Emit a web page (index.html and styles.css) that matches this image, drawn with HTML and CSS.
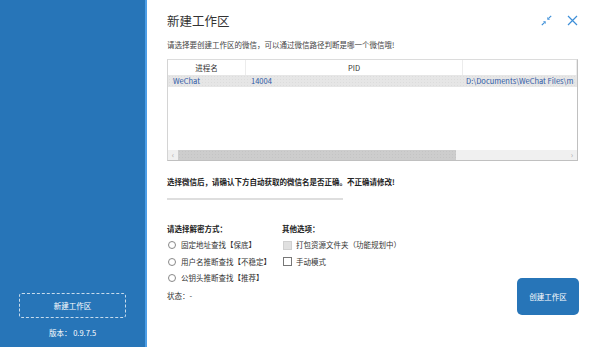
FILE: index.html
```html
<!DOCTYPE html>
<html lang="zh">
<head>
<meta charset="utf-8">
<title>新建工作区</title>
<link rel="stylesheet" href="styles.css">
</head>
<body>
<div class="app">
  <aside class="sidebar">
    <div class="side-btn">新建工作区</div>
    <div class="version">版本：&nbsp;0.9.7.5</div>
  </aside>
  <main class="main">
    <header class="head">
      <h1 class="title">新建工作区</h1>
      <div class="win-icons">
        <svg class="ico" width="11" height="11" viewBox="0 0 11 11">
          <path d="M10.2 0.8 L7.6 3.4" stroke="#3d8fd8" stroke-width="1.2" fill="none"/>
          <path d="M6.3 4.7 L6.3 2 L9 4.7 Z" fill="#3d8fd8"/>
          <path d="M0.8 10.2 L3.4 7.6" stroke="#3d8fd8" stroke-width="1.2" fill="none"/>
          <path d="M4.7 6.3 L4.7 9 L2 6.3 Z" fill="#3d8fd8"/>
        </svg>
        <svg class="ico" width="11" height="11" viewBox="0 0 11 11">
          <path d="M1 1 L10 10 M10 1 L1 10" stroke="#3d8fd8" stroke-width="1.2" fill="none"/>
        </svg>
      </div>
    </header>
    <p class="sub">请选择要创建工作区的微信，可以通过微信路径判断是哪一个微信哦!</p>
    <div class="table">
      <div class="thead">
        <div class="c1">进程名</div>
        <div class="c2">PID</div>
        <div class="c3"></div>
      </div>
      <div class="trow">
        <div class="c1 l">WeChat</div>
        <div class="c2 l">14004</div>
        <div class="c3 l">D:\Documents\WeChat Files\m</div>
      </div>
      <div class="tbody"></div>
      <div class="hscroll">
        <span class="arr">‹</span>
        <div class="track"><div class="thumb"></div></div>
        <span class="arr">›</span>
      </div>
    </div>
    <p class="notice">选择微信后，请确认下方自动获取的微信名是否正确。不正确请修改!</p>
    <div class="name-input"></div>
    <div class="bottom">
      <div class="opts">
        <div class="col col-left">
          <div class="opt-h">请选择解密方式：</div>
          <label class="opt"><span class="radio"></span>固定地址查找【保底】</label>
          <label class="opt"><span class="radio"></span>用户名推断查找【不稳定】</label>
          <label class="opt"><span class="radio"></span>公钥头推断查找【推荐】</label>
          <div class="status">状态：-</div>
        </div>
        <div class="col">
          <div class="opt-h">其他选项：</div>
          <label class="opt"><span class="check disabled"></span>打包资源文件夹（功能规划中）</label>
          <label class="opt"><span class="check"></span>手动模式</label>
        </div>
      </div>
      <div class="create-btn">创建工作区</div>
    </div>
  </main>
</div>
</body>
</html>
```

FILE: styles.css
```css
* { box-sizing: border-box; }
html, body { margin: 0; padding: 0; }
body {
  width: 600px;
  height: 347px;
  overflow: hidden;
  background: #fff;
  font-family: "Noto Sans CJK SC", "Noto Sans", sans-serif;
  color: #333;
}
.app { display: flex; width: 600px; height: 347px; }
.sidebar {
  width: 147px;
  flex: none;
  background: #2775b8;
  border-right: 2px solid #4d9ee6;
  display: flex;
  flex-direction: column;
  justify-content: flex-end;
  padding: 0 0 8px 19px;
}
.side-btn {
  width: 107px;
  height: 25px;
  border: 1px dashed rgba(255,255,255,0.75);
  border-radius: 3px;
  color: #fff;
  font-size: 7.5px;
  display: flex;
  align-items: center;
  justify-content: center;
}
.version {
  width: 107px;
  text-align: center;
  color: #fff;
  font-size: 7.5px;
  margin-top: 9px;
  line-height: 12px;
}
.main {
  flex: 1;
  padding: 0 22px 0 20px;
  display: flex;
  flex-direction: column;
}
.head {
  display: flex;
  align-items: center;
  justify-content: space-between;
  height: 40px;
}
.title {
  margin: 0;
  font-size: 12.5px;
  font-weight: normal;
  color: #333;
}
.win-icons { display: flex; gap: 15px; align-items: center; }
.ico { display: block; }
.sub {
  margin: 0;
  font-size: 7.5px;
  line-height: 10px;
  color: #444;
  height: 19px;
}
.table {
  width: 411px;
  height: 102px;
  border: 1px solid #c0c0c0;
  border-top-color: #dcdcdc;
  border-left-color: #d4d4d4;
  display: flex;
  flex-direction: column;
  overflow: hidden;
  font-size: 7.5px;
}
.thead, .trow { display: flex; flex: none; white-space: nowrap; }
.thead { height: 15px; line-height: 15px; color: #333; }
.thead > div { text-align: center; border-right: 1px solid #ececec; }
.trow {
  height: 12px;
  line-height: 12px;
  color: #2f5aa6;
  background: #e6e6e6;
  background-image: radial-gradient(#dcdcdc 0.6px, transparent 0.7px);
  background-size: 3px 3px;
}
.c1 { width: 78px; flex: none; }
.c2 { width: 217px; flex: none; }
.c3 { flex: 1; min-width: 0; overflow: hidden; }
.l { padding-left: 5px; }
.c3.l { padding-left: 3px; }
.tbody { flex: 1; }
.hscroll {
  height: 10px;
  flex: none;
  display: flex;
  align-items: center;
  background: #f0f0f0;
  color: #aaa;
  font-size: 8px;
}
.arr { width: 10px; text-align: center; line-height: 10px; flex: none; }
.track { flex: 1; height: 10px; }
.thumb {
  width: 278px;
  height: 10px;
  background: #cdcdcd;
  background-image: radial-gradient(#c4c4c4 0.6px, transparent 0.7px);
  background-size: 3px 3px;
}
.notice {
  margin: 15px 0 0;
  font-size: 7.5px;
  line-height: 11px;
  font-weight: bold;
  color: #222;
}
.name-input {
  width: 176px;
  height: 2px;
  background: #dedede;
  margin-top: 11px;
}
.bottom {
  display: flex;
  justify-content: space-between;
  align-items: flex-end;
  margin-top: 23px;
  height: 92px;
}
.opts { display: flex; align-self: flex-start; }
.col { display: flex; flex-direction: column; }
.col-left { width: 115px; }
.opt-h { font-size: 7.5px; font-weight: bold; line-height: 12px; height: 14px; color: #222; }
.opt {
  display: flex;
  align-items: center;
  font-size: 7.5px;
  line-height: 12px;
  height: 16.5px;
  color: #333;
  white-space: nowrap;
}
.radio {
  width: 8px; height: 8px;
  border: 1px solid #888;
  border-radius: 50%;
  margin: 0 5px 0 1px;
  flex: none;
}
.check {
  width: 9px; height: 9px;
  border: 1px solid #777;
  margin: 0 4px 0 1px;
  flex: none;
}
.check.disabled { background: #e0e0e0; border-color: #d0d0d0; }
.status { font-size: 7.5px; line-height: 12px; margin-top: 3px; color: #333; }
.create-btn {
  width: 62px;
  height: 37px;
  background: #2775b8;
  border-radius: 5px;
  color: #fff;
  font-size: 7.5px;
  display: flex;
  align-items: center;
  justify-content: center;
  margin-right: -1px;
}
```
